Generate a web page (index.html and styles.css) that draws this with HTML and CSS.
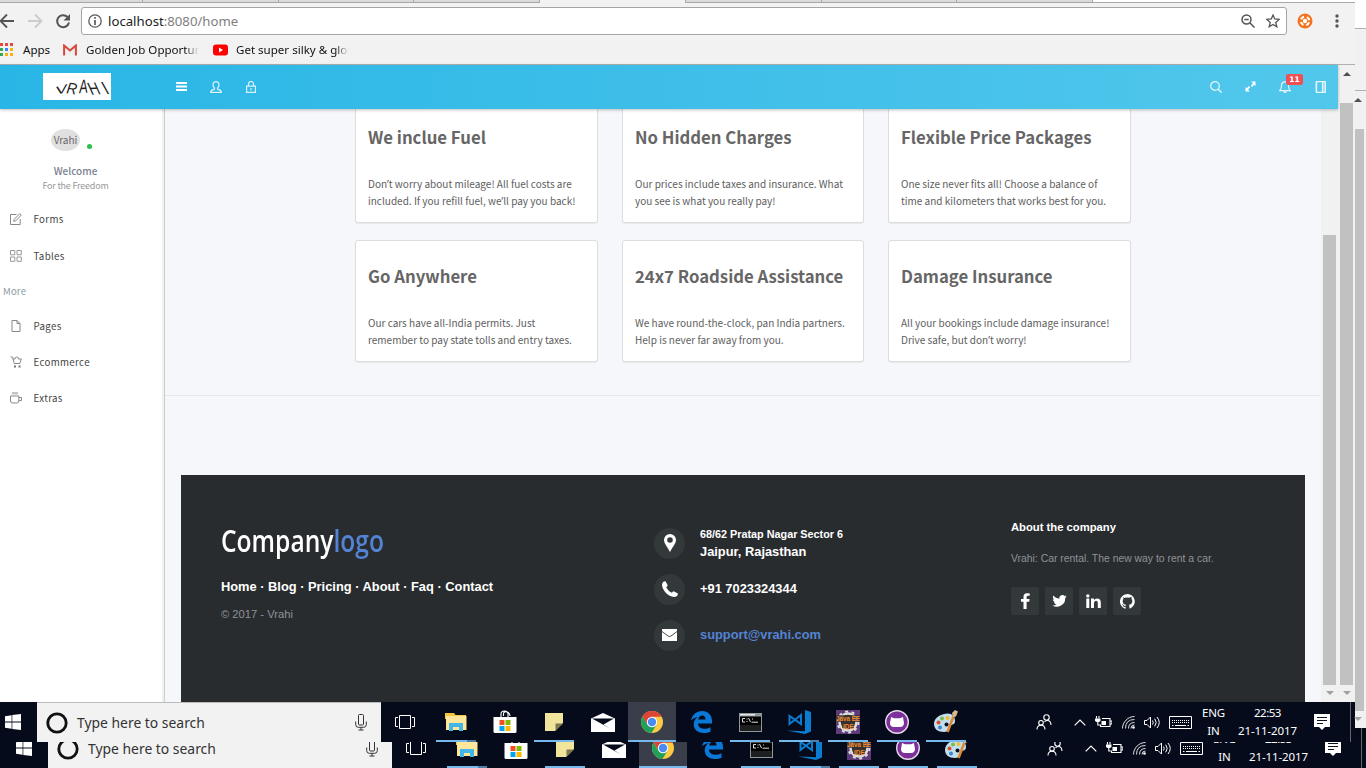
FILE: index.html
```html
<!DOCTYPE html>
<html lang="en">
<head>
<meta charset="utf-8">
<title>Vrahi</title>
<link rel="stylesheet" href="styles.css">
</head>
<body>
<svg class="sprite" width="0" height="0">
  <symbol id="win" viewBox="0 0 16 16"><path fill="#fff" d="M0 2.2 6.6 1.2V7.6H0zM7.3 1.1 16 0V7.6H7.3zM0 8.4H6.6V14.8L0 13.8zM7.3 8.4H16V16L7.3 14.9z"/></symbol>
  <symbol id="ring" viewBox="0 0 22 22"><circle cx="11" cy="11" r="9.2" fill="none" stroke="#111" stroke-width="2.8"/></symbol>
  <symbol id="mic" viewBox="0 0 12 17"><g fill="none" stroke="#333"><rect x="3.500" y=".5" width="5" height="10.500" rx="1"/><path d="M.7 7.500v3.200q0 2.600 2.600 2.600h5.400q2.600 0 2.600-2.600V7.500M6 13.500V16M3.500 16h5"/></g></symbol>
  <symbol id="view" viewBox="0 0 20 14"><path d="M4.500.5h11v13h-11zM3 2.500H.5v9H3M17 2.500h2.500v9H17" fill="none" stroke="#fff"/></symbol>
  <symbol id="folder" viewBox="0 0 22 20"><path fill="#f5c63c" d="M0 1h9l1.500 2H21v4H0z"/><path fill="#ffe69a" d="M1 4h20.500v14H1z"/><path fill="#43b5e6" d="M4 11h14v8h-4v-4H8v4H4z"/></symbol>
  <symbol id="store" viewBox="0 0 24 24"><path d="M8 8V4q0-3 3.500-3T15 4v4M10.500 6V3.500Q11 1 14 2t3 4" fill="none" stroke="#fff" stroke-width="1.100"/><path fill="#fff" d="M.5 7h23v14.500q0 1.500-1.500 1.500H2Q.5 23 .5 21.500z"/><path fill="#f25022" d="M6.500 10h5v5h-5z"/><path fill="#7fba00" d="M12.500 10h5v5h-5z"/><path fill="#00a4ef" d="M6.500 16h5v5h-5z"/><path fill="#ffb900" d="M12.500 16h5v5h-5z"/></symbol>
  <symbol id="note" viewBox="0 0 18 18"><path fill="#f1e59b" d="M0 0h18v10l-8 8H0z"/><path fill="#7c774f" d="M10.500 10.500H18L10.500 18z"/></symbol>
  <symbol id="mail" viewBox="0 0 24 19"><path fill="#fff" d="M0 5.500 12 0l12 5.500V19H0z"/><path fill="#050b1b" d="M1 5.500h22L12.500 11.500 19 15.500z"/></symbol>
  <symbol id="chrome" viewBox="0 0 22 22"><circle cx="11" cy="11" r="11" fill="#fbcb43"/><path fill="#db4437" d="M1.500 5.500A11 11 0 0 1 20.600 5.700H11L6.300 13.500z"/><path fill="#21a05a" d="M1.500 5.500A11 11 0 0 0 10.500 22L15.500 13.700 11 16 6.300 13.600z"/><circle cx="11" cy="11" r="5.200" fill="#fff"/><circle cx="11" cy="11" r="4.200" fill="#4a8af4"/></symbol>
  <symbol id="edge" viewBox="0 0 21 22"><path fill="#0a78d7" d="M0 9.600C1.200 3.500 5.500 0 11 0c6.400 0 10 4.500 10 10v2.500H7c.2 4 3.700 5.300 7 5.300 2.300 0 4-.6 5.500-1.500v4.500C17.500 21.700 15.400 22 12.700 22 6.500 22 2.700 18.500 2.700 13.300c0-3.300 1.600-5.800 4.300-7.300C4 6.400 1.700 7.700 0 9.600zM7.200 8.600H14.500C14.500 6 13.300 4.600 11.200 4.600 8.900 4.600 7.600 6.300 7.200 8.600z"/></symbol>
  <symbol id="cmd" viewBox="0 0 23 19"><path fill="#8f9797" d="M0 0h23v19H0z"/><path fill="#dfe7ea" d="M1 1h15v1.500H1z"/><path fill="#000" d="M1 3.500h21V18H1z"/><path fill="#1c1e1f" d="M1 12h21v6H1z"/><path d="M6 5.500H3.500V9H6M8 5.500v1M8 8v1M9.500 5l2 4M13.500 5.500v1M12.500 9.200H19" fill="none" stroke="#ddd"/></symbol>
  <symbol id="code" viewBox="0 0 24 24"><path fill="#0b7dd0" d="M18 0l6 2v19.500L18 24 0 20.500l18 .8z"/><path fill="none" stroke="#0b7dd0" stroke-width="2" d="M14 5v9L2.500 6v8z"/></symbol>
  <symbol id="java" viewBox="0 0 24 24"><path fill="#5e3b78" d="M0 0h24v24H0z"/><circle cx="12" cy="12" r="8.500" fill="#38302f" stroke="#dcdcdc" stroke-width="2.500"/><circle cx="12" cy="12" r="10.500" fill="none" stroke="#dcdcdc" stroke-width="2" stroke-dasharray="3 3.600"/><path fill="#38302f" d="M0 5h24v7H0zM6 12h12v6H6z" opacity=".75"/><text x="0" y="11" textLength="24" lengthAdjust="spacingAndGlyphs" class="java-t">Java EE</text><text x="7" y="18.500" textLength="11" lengthAdjust="spacingAndGlyphs" class="java-t">IDE</text></symbol>
  <symbol id="cat" viewBox="0 0 24 24"><circle cx="12" cy="12" r="11.300" fill="#7d2f9c" stroke="#e6dce9" stroke-width="1.400"/><path fill="#fff" d="M6 7l3 1.300h6L18 7l.5 3.500c1 2.500.5 6.500-3 6.500h-7c-3.500 0-4-4-3-6.500z"/></symbol>
  <symbol id="paint" viewBox="0 0 24 24"><path fill="#c2dff0" d="M10 4c7-2 11 2 11 7 0 4-3 3-5 5s0 6-6 6S0 19 0 14 4 5.500 10 4z"/><circle cx="12.500" cy="14.500" r="2" fill="#08101f"/><circle cx="4.500" cy="12.500" r="2" fill="#d9512c"/><circle cx="8" cy="8.500" r="2" fill="#7fba45"/><circle cx="13.500" cy="8" r="2" fill="#f2bd30"/><circle cx="6" cy="17.500" r="2" fill="#3e83cf"/><path d="M20 5l-6.500 17" stroke="#dd8a34" stroke-width="2.600"/><path fill="#d8b78b" d="M18 3l3-3 3 1.500-2 5-3 .5z"/></symbol>
  <symbol id="people" viewBox="0 0 16 16"><g fill="none" stroke="#fff" stroke-width="1.100"><circle cx="10.500" cy="3.500" r="2.700"/><circle cx="5" cy="8.800" r="2.300"/><path d="M1 15.500q0-4.200 4-4.200t4 4.200M8.500 8q1-1.500 3-1.500 3.200 0 3.500 4.500"/></g></symbol>
  <symbol id="caret" viewBox="0 0 12 7"><path d="M.7 6.300 6 1l5.300 5.300" fill="none" stroke="#fff" stroke-width="1.200"/></symbol>
  <symbol id="battery" viewBox="0 0 17 13"><path d="M7 2.500h8v8H5.500V8.500M15.500 5H17v3h-1.500M1.500 0v2.500M4 0v2.500M2.800 5v4h2" fill="none" stroke="#fff" stroke-width="1.100"/><path fill="#fff" d="M0 2.500h5.500V5L4 6H1.500L0 5zM6.500 5h4.500v4H6.500z"/></symbol>
  <symbol id="wifi" viewBox="0 0 13 13"><g fill="none" stroke="#ddd" stroke-width="1"><path d="M.5 12.500C.5 6 6 .5 12.500.5M3.500 12.500q0-9 9-9M6.500 12.500q0-6 6-6"/><path d="M9 12.500q0-3.500 3.500-3.500" /></g><circle cx="11.500" cy="11.500" r="1.300" fill="#fff"/></symbol>
  <symbol id="vol" viewBox="0 0 16 13"><path d="M.5 4.500H3L6.500 1v11L3 8.500H.5zM8.500 4.500q1.500 2 0 4M10.700 2.700q3 3.800 0 7.600M13 1q4.500 5.500 0 11" fill="none" stroke="#fff"/></symbol>
  <symbol id="kbd" viewBox="0 0 23 13"><path d="M.5.500h22v12H.5z" fill="none" stroke="#fff"/><path d="M3 4.500h17M3 6.500h17" stroke="#fff" stroke-dasharray="1 1"/><path d="M6 9.500h11M3 9.500h1.500M18.500 9.500H20" stroke="#fff"/></symbol>
  <symbol id="notif" viewBox="0 0 16 16"><path fill="#fff" d="M0 0h16v13h-5l-3 3-3-3H0z"/><path d="M3 3.500h10M3 6.500h10M3 9.500h6" stroke="#0a1120"/></symbol>
</svg>

<div class="upper">
  <div class="window">
    <div class="tabs"><i class="tab"></i><i class="tab"></i><i class="tab t3"></i><i class="tab t4"></i><i class="tab active"></i><i class="tab"></i><i class="tab"></i><i class="tab"></i></div>
    <div class="toolbar">
      <svg class="nav" width="76" height="20" viewBox="0 0 76 20" fill="none" stroke-width="1.900"><path d="M14 10H1M7 3.500.5 10 7 16.500" stroke="#555"/><path d="M28 10h13M35 3.500 41.500 10 35 16.500" stroke="#ccc"/><path d="M67.500 6A6 6 0 1 0 69 11.500" stroke="#555" stroke-width="2"/><path d="M70 3v6.500h-6.500z" fill="#555"/></svg>
      <div class="address">
        <svg width="14" height="14" viewBox="0 0 14 14"><circle cx="7" cy="7" r="6.200" fill="none" stroke="#5a5a5a" stroke-width="1.300"/><path d="M7 3v1.700M7 6v5" stroke="#5a5a5a" stroke-width="1.700"/></svg>
        <span class="url">localhost<em>:8080/home</em></span>
        <svg width="14" height="14" viewBox="0 0 14 14" fill="none" stroke="#555" stroke-width="1.500"><circle cx="5.500" cy="5.500" r="4.500"/><path d="M9 9l4.500 4.500M3.300 5.500h4.400"/></svg>
        <svg class="star" width="14" height="14" viewBox="0 0 14 14"><path d="M7 1l1.700 4 4.500.4-3.400 3 1 4.400L7 10.500l-3.800 2.300 1-4.400-3.400-3 4.500-.4z" fill="none" stroke="#555" stroke-width="1.300"/></svg>
      </div>
      <svg class="ext" width="16" height="16" viewBox="0 0 16 16"><circle cx="8" cy="8" r="7.500" fill="#f47521"/><circle cx="8" cy="8" r="4.300" fill="none" stroke="#fff" stroke-width="2" stroke-dasharray="3.750 3" stroke-dashoffset="-1.500"/><circle cx="8" cy="8" r="2.200" fill="#fff"/></svg>
      <svg class="dots" width="4" height="14" viewBox="0 0 4 14" fill="#555"><circle cx="2" cy="2" r="1.700"/><circle cx="2" cy="7" r="1.700"/><circle cx="2" cy="12" r="1.700"/></svg>
    </div>
    <div class="bookmarks">
      <svg width="13" height="13" viewBox="0 0 13 13"><path fill="#e8453c" d="M0 0h3v3H0zM5 0h3v3H5zM10 0h3v3h-3z"/><path fill="#34a853" d="M0 5h3v3H0zM0 10h3v3H0z"/><path fill="#4285f4" d="M5 5h3v3H5z"/><path fill="#f9b010" d="M10 5h3v3h-3zM10 10h3v3h-3zM5 10h3v3H5z"/></svg>
      <span class="b1">Apps</span>
      <svg class="gm" width="14" height="12" viewBox="0 0 14 12"><path fill="#eee" d="M1 1h12v10H1z"/><path d="M1.100 11.500V1.500L7 6.500l5.900-5v10" fill="none" stroke="#d8473c" stroke-width="2"/></svg>
      <span class="b2 fade">Golden Job Opportur</span>
      <svg class="yt" width="15" height="12" viewBox="0 0 15 12"><rect y=".5" width="15" height="11" rx="3" fill="#f00"/><path fill="#fff" d="M6 3.500 10 6 6 8.500z"/></svg>
      <span class="b3 fade">Get super silky &amp; glos</span>
    </div>
    <div class="viewport">
      <div class="page">
        <header class="topbar">
          <div class="brand"><b>V</b><b>R</b><b>A</b><b>H</b><b>I</b></div>
          <svg class="ic-menu" width="11" height="9" viewBox="0 0 11 9"><path d="M0 1h11M0 4.500h11M0 8h11" stroke="#fff" stroke-width="1.800"/></svg>
          <svg class="ic-user" width="12" height="12" viewBox="0 0 12 12"><path d="M6 .6c2 0 3 1.300 3 3.200C9 5.400 8.300 6.500 7.500 7v1c2 .6 3.800 1 3.900 3.400H.6C.7 9 2.500 8.600 4.500 8V7C3.700 6.500 3 5.400 3 3.800 3 1.900 4 .6 6 .6z" fill="none" stroke="#d9f3fc" stroke-width="1.200"/></svg>
          <svg class="ic-lock" width="10" height="12" viewBox="0 0 10 12"><path d="M.6 5.100h8.800v6.300H.6zM2.500 5V3a2.500 2.500 0 0 1 5 0v2M5 7v2.500" fill="none" stroke="#d9f3fc" stroke-width="1.200"/></svg>
          <span class="grow"></span>
          <svg class="ic-search" width="12" height="12" viewBox="0 0 12 12"><circle cx="5" cy="5" r="4.300" fill="none" stroke="#e5f7fd" stroke-width="1.200"/><path d="M8 8l3.600 3.600" stroke="#e5f7fd" stroke-width="1.500"/></svg>
          <svg class="ic-exp" width="11" height="11" viewBox="0 0 11 11"><path fill="#fff" d="M6 .5h4.500V5L9.200 3.700 7 5.900 5.900 4.800 8 2.300zM5 10.500H.5V6l1.300 1.300L4 5.100l1.100 1.100L3 8.700z"/></svg>
          <span class="bell"><svg width="12" height="12" viewBox="0 0 12 12"><path d="M.8 9.600C2.300 8.500 2.300 7 2.500 4.500 2.600 2.300 4 .8 6 .8s3.400 1.500 3.500 3.700c.2 2.500.2 4 1.700 5.100zM4.800 10q.2 1.500 1.200 1.500T7.200 10" fill="none" stroke="#e5f7fd" stroke-width="1.200"/></svg><b class="badge">11</b></span>
          <svg class="ic-book" width="11" height="12" viewBox="0 0 11 12"><path d="M1.500.6h8.900v10.800H1.500zM7.500.6v10.800" fill="none" stroke="#e5f7fd" stroke-width="1.200"/><path d="M.2 2h2M.2 4h2M.2 6h2M.2 8h2M.2 10h2" stroke="#e5f7fd"/><path fill="#a9e1f5" d="M8 1h2v10H8z"/></svg>
        </header>
        <div class="body">
          <aside class="side">
            <div class="avatar"><span class="face">Vrahi</span><i class="online"></i></div>
            <div class="welcome">Welcome</div>
            <div class="tagline">For the Freedom</div>
            <nav>
              <a class="n1"><svg width="12" height="12" viewBox="0 0 12 12"><path d="M6.500 1.500H.5v10h9.700V6M4 6.500 9.800.6l1.500 1.500L5.500 8 3.700 8.300z" fill="none" stroke="#888"/></svg>Forms</a>
              <a class="n2"><svg width="12" height="12" viewBox="0 0 12 12"><path d="M.5.500h4.300v4.300H.5zM7 .5h4.300v4.300H7zM.5 7h4.300v4.300H.5zM7 7h4.300v4.300H7z" fill="none" stroke="#999"/></svg>Tables</a>
              <h6>More</h6>
              <a class="n3"><svg width="12" height="12" viewBox="0 0 12 12"><path d="M2 .5h5L10 3.500v8H2zM7 .5v3h3" fill="none" stroke="#888"/></svg>Pages</a>
              <a class="n4"><svg width="12" height="12" viewBox="0 0 12 12"><path d="M.5 1h2l1.800 6.500h5.500l1.500-4.500H8.500M3 3h2q0-2 1.800-2t1.700 2" fill="none" stroke="#888"/><path fill="#777" d="M4 9.500h2v2H4zM8.500 9.500h2v2h-2z"/></svg>Ecommerce</a>
              <a class="n5"><svg width="12" height="12" viewBox="0 0 12 12"><path d="M.5 4h8.300v5q0 2-2 2h-4q-2.300 0-2.300-2zM9 5.500h2.500v3H9M3 0v2.500M5 0v2.500M7 0v2.500" fill="none" stroke="#888"/></svg>Extras</a>
            </nav>
          </aside>
          <main>
            <section class="cards">
              <article><h3>We inclue Fuel</h3><p>Don<span class="ap">’</span>t worry about mileage! All fuel costs are<br>included. If you refill fuel, we<span class="ap">’</span>ll pay you back!</p></article>
              <article><h3>No Hidden Charges</h3><p>Our prices include taxes and insurance. What<br>you see is what you really pay!</p></article>
              <article><h3>Flexible Price Packages</h3><p>One size never fits all! Choose a balance of<br>time and kilometers that works best for you.</p></article>
              <article><h3>Go Anywhere</h3><p>Our cars have all-India permits. Just<br>remember to pay state tolls and entry taxes.</p></article>
              <article><h3>24x7 Roadside Assistance</h3><p>We have round-the-clock, pan India partners.<br>Help is never far away from you.</p></article>
              <article><h3>Damage Insurance</h3><p>All your bookings include damage insurance!<br>Drive safe, but don<span class="ap">’</span>t worry!</p></article>
            </section>
            <hr>
            <footer>
              <div class="f1">
                <div class="logo">Company<em>logo</em></div>
                <div class="links">Home · Blog · Pricing · About · Faq · Contact</div>
                <div class="copy">© 2017 - Vrahi</div>
              </div>
              <div class="f2">
                <div class="row"><i><svg width="12" height="18" viewBox="0 0 12 18"><path fill="#fff" fill-rule="evenodd" d="M6 0a6 6 0 0 1 6 6c0 3-2.500 5.500-6 12C2.500 11.500 0 9 0 6a6 6 0 0 1 6-6zm0 3.200a2.800 2.800 0 1 0 0 5.600 2.800 2.800 0 0 0 0-5.600z"/></svg></i><div><small>68/62 Pratap Nagar Sector 6</small><br>Jaipur, Rajasthan</div></div>
                <div class="row"><i><svg width="16" height="16" viewBox="0 0 16 16"><path fill="#fff" d="M3.500.2 5.700 4.300Q5.500 5.400 4.200 6.200 6 10 9.800 11.800q.9-1.300 1.900-1.500L15.900 12.500q0 3.300-4 3.500C6.500 15.800.2 9.500 0 4.100.2.800 1.800.1 3.500.2z"/></svg></i><div>+91 7023324344</div></div>
                <div class="row"><i><svg width="15" height="12" viewBox="0 0 15 12"><path fill="#fff" d="M0 0h15v12H0z"/><path d="M0 2.500 6 7q1.500 1 3 0l6-4.500" fill="none" stroke="#33383b" stroke-width=".9"/></svg></i><div class="sup">support@vrahi.com</div></div>
              </div>
              <div class="f3">
                <h4>About the company</h4>
                <p>Vrahi: Car rental. The new way to rent a car.</p>
                <div class="social">
                  <a><svg width="9" height="16" viewBox="0 0 9 16"><path fill="#fff" d="M2.500 16V8.700H0V6h2.500V4Q2.500.4 6 .3 7.800.2 8.700.4v2.400H7Q5.600 2.800 5.600 4v2h3l-.4 2.700H5.600V16z"/></svg></a>
                  <a><svg width="15" height="12" viewBox="0 0 24 20"><path fill="#fff" d="M24 2.400c-.9.400-1.800.7-2.800.8 1-.6 1.800-1.600 2.200-2.700-1 .6-2 1-3.100 1.200a4.900 4.900 0 0 0-8.400 4.500C7.700 6 4.100 4 1.700 1 .4 3.200 1 6.100 3.200 7.500 2.400 7.500 1.600 7.300 1 6.900c0 2.300 1.600 4.400 3.900 4.900-.7.200-1.500.2-2.200.1.600 2 2.400 3.400 4.600 3.400A9.900 9.900 0 0 1 0 17.300 14 14 0 0 0 21.500 4.900c1-.7 1.900-1.600 2.500-2.500z"/></svg></a>
                  <a><svg width="15" height="14" viewBox="0 0 15 14"><path fill="#fff" d="M.3 4.600h3V14h-3zM5 4.600h3v1.300Q9 4.400 11 4.400q3.800 0 3.800 4.200V14h-3V9q0-2.200-1.700-2.200T8 9v5H5z"/><circle cx="1.800" cy="1.900" r="1.700" fill="#fff"/></svg></a>
                  <a><svg width="15" height="15" viewBox="0 0 16 16"><path fill="#fff" d="M8 0a8 8 0 0 0-2.500 15.600c.4.100.5-.2.500-.4v-1.500c-2.200.5-2.700-1-2.700-1-.4-.9-.9-1.200-.9-1.200-.7-.5.100-.5.100-.5.800.1 1.200.8 1.200.8.700 1.300 1.900.9 2.300.7.100-.5.300-.9.500-1.100C4.700 11.200 2.900 10.500 2.900 7.400c0-.9.300-1.600.8-2.100-.1-.2-.4-1 .1-2.100 0 0 .7-.2 2.200.8a7.500 7.500 0 0 1 4 0c1.500-1 2.200-.8 2.200-.8.400 1.100.2 1.900.1 2.100.5.500.8 1.200.8 2.100 0 3.100-1.900 3.800-3.700 4 .3.200.6.700.6 1.500v2.200c0 .2.100.5.500.4A8 8 0 0 0 8 0z"/></svg></a>
                </div>
              </div>
            </footer>
          </main>
          <div class="scroll inner"><i class="thumb"></i><i class="down"></i></div>
        </div>
      </div>
      <div class="scroll outer"><i class="up"></i><i class="thumb"></i><i class="down"></i></div>
    </div>
    <div class="taskbar">
      <div class="start"><svg width="16" height="16"><use href="#win"/></svg></div>
      <div class="find"><svg width="22" height="22"><use href="#ring"/></svg><span>Type here to search</span><svg class="mic" width="12" height="17"><use href="#mic"/></svg></div>
      <div class="app tv"><svg width="20" height="14"><use href="#view"/></svg></div>
      <div class="app on split"><svg width="22" height="20"><use href="#folder"/></svg></div>
      <div class="app"><svg width="24" height="24"><use href="#store"/></svg></div>
      <div class="app on"><svg width="18" height="18"><use href="#note"/></svg></div>
      <div class="app"><svg width="24" height="19"><use href="#mail"/></svg></div>
      <div class="app on current"><svg width="22" height="22"><use href="#chrome"/></svg></div>
      <div class="app"><svg width="21" height="22"><use href="#edge"/></svg></div>
      <div class="app on"><svg width="23" height="19"><use href="#cmd"/></svg></div>
      <div class="app on split"><svg width="24" height="24"><use href="#code"/></svg></div>
      <div class="app on"><svg width="24" height="24"><use href="#java"/></svg></div>
      <div class="app on"><svg width="24" height="24"><use href="#cat"/></svg></div>
      <div class="app on"><svg width="24" height="24"><use href="#paint"/></svg></div>
      <div class="tray"><i class="w48"><svg width="16" height="16"><use href="#people"/></svg></i><i class="w24"><svg width="12" height="7"><use href="#caret"/></svg></i><i class="w23"><svg width="17" height="13"><use href="#battery"/></svg></i><i class="w26"><svg width="13" height="13"><use href="#wifi"/></svg></i><i class="w22"><svg width="16" height="13"><use href="#vol"/></svg></i><i class="w34"><svg width="23" height="13"><use href="#kbd"/></svg></i><div class="lang"><span>ENG</span><span>IN</span></div><div class="clock"><span>22:53</span><span>21-11-2017</span></div><i class="w34"><svg width="16" height="16"><use href="#notif"/></svg></i><i class="peek"></i></div>
    </div>
  </div>
  <div class="behind">
    <div class="bt"></div><div class="bm"></div>
    <div class="scroll far"><i class="up"></i><i class="thumb"></i><i class="down"></i></div>
    <div class="bd"></div>
  </div>
</div>
<div class="lower">
    <div class="taskbar back">
      <div class="start"><svg width="16" height="16"><use href="#win"/></svg></div>
      <div class="find"><svg width="22" height="22"><use href="#ring"/></svg><span>Type here to search</span><svg class="mic" width="12" height="17"><use href="#mic"/></svg></div>
      <div class="app tv"><svg width="20" height="14"><use href="#view"/></svg></div>
      <div class="app on split"><svg width="22" height="20"><use href="#folder"/></svg></div>
      <div class="app"><svg width="24" height="24"><use href="#store"/></svg></div>
      <div class="app on"><svg width="18" height="18"><use href="#note"/></svg></div>
      <div class="app"><svg width="24" height="19"><use href="#mail"/></svg></div>
      <div class="app on current"><svg width="22" height="22"><use href="#chrome"/></svg></div>
      <div class="app"><svg width="21" height="22"><use href="#edge"/></svg></div>
      <div class="app on"><svg width="23" height="19"><use href="#cmd"/></svg></div>
      <div class="app on split"><svg width="24" height="24"><use href="#code"/></svg></div>
      <div class="app on"><svg width="24" height="24"><use href="#java"/></svg></div>
      <div class="app on"><svg width="24" height="24"><use href="#cat"/></svg></div>
      <div class="app on"><svg width="24" height="24"><use href="#paint"/></svg></div>
      <div class="tray"><i class="w48"><svg width="16" height="16"><use href="#people"/></svg></i><i class="w24"><svg width="12" height="7"><use href="#caret"/></svg></i><i class="w23"><svg width="17" height="13"><use href="#battery"/></svg></i><i class="w26"><svg width="13" height="13"><use href="#wifi"/></svg></i><i class="w22"><svg width="16" height="13"><use href="#vol"/></svg></i><i class="w34"><svg width="23" height="13"><use href="#kbd"/></svg></i><div class="lang"><span>ENG</span><span>IN</span></div><div class="clock"><span>22:53</span><span>21-11-2017</span></div><i class="w34"><svg width="16" height="16"><use href="#notif"/></svg></i><i class="peek"></i></div>
    </div>
</div>
</body>
</html>
```
FILE: styles.css
```css
* { box-sizing: border-box; }
body { margin: 0; width: 1366px; height: 768px; overflow: hidden; background: #fff; font-family: "Noto Sans CJK SC", "Noto Sans", sans-serif; color: #666; }
svg { display: block; flex: none; }
i, em { font-style: normal; }
.sprite { position: absolute; }
.java-t { font: bold 8px "Liberation Sans", sans-serif; fill: #f08a2c; }
.upper { display: flex; height: 742px; }
.window { width: 1355px; height: 742px; display: flex; flex-direction: column; }

/* browser frame */
.tabs { height: 3px; display: flex; background: #fff; border-bottom: 1px solid #a8a8a8; }
.tab { width: 135.500px; height: 2px; background: #dadada; border-right: 1px solid #aaa; }
.tab:first-child { width: 143px; }
.tab.t4 { width: 126px; }
.tab.active { width: 146px; height: 3px; background: #f2f2f2; }
.toolbar { height: 34px; background: #f2f2f2; display: flex; align-items: center; padding-top: 2px; }
.nav { margin-right: 5px; }
.address { width: 1206px; height: 28px; border: 1px solid #a5a5a5; border-radius: 3px; background: #fff; display: flex; align-items: center; padding: 0 6px; }
.url { flex: 1; margin-left: 6px; font: 13.200px "Noto Sans", sans-serif; color: #222; }
.url em { color: #808080; }
.star { margin-left: 11px; }
.ext { margin-left: 10px; }
.dots { margin-left: 22px; }
.bookmarks { height: 28px; background: #f2f2f2; border-bottom: 1px solid #b0b0b0; display: flex; align-items: center; font: 11.550px "Noto Sans", sans-serif; color: #111; padding-bottom: 2px; white-space: nowrap; }
.b1 { margin-left: 10px; width: 40px; }
.b2 { margin-left: 9px; width: 113px; }
.yt { margin-left: 14px; }
.b3 { margin-left: 8px; width: 113px; }
.fade { overflow: hidden; -webkit-mask-image: linear-gradient(90deg, #000 88%, transparent); mask-image: linear-gradient(90deg, #000 88%, transparent); }

/* page header */
.viewport { height: 637px; display: flex; }
.page { width: 1338px; height: 637px; display: flex; flex-direction: column; }
.topbar { height: 44px; flex: none; background: linear-gradient(90deg, #29b6e6, #52c7ec); display: flex; align-items: center; box-shadow: 0 1px 3px rgba(0,0,0,.25); z-index: 2; padding: 0 12px 1px 0; }
.brand { width: 68px; height: 27px; margin-left: 43px; background: #fff; display: flex; justify-content: center; align-items: center; padding: 4px 0 0 6px; color: #222; }
.brand b { font: italic 16px/16px "Liberation Sans", sans-serif; transform: rotate(8deg) scale(.9, 1); }
.brand b:nth-child(1) { transform: translateY(1px) rotate(-14deg) scale(1.1,.7); }
.brand b:nth-child(3) { transform: translateY(-2px) rotate(-4deg) scale(.8, 1.2); }
.brand b:nth-child(4) { transform: rotate(-4deg) skewX(28deg) scale(.9, 1.1); }
.brand b:nth-child(5) { transform: translate(3px, -1px) skewX(36deg) scaleY(1.1); }
.ic-menu { margin-left: 65px; }
.ic-user { margin-left: 23px; }
.ic-lock { margin-left: 24px; }
.grow { flex: 1; }
.ic-exp { margin-left: 23px; }
.bell { position: relative; margin-left: 23px; }
.badge { position: absolute; left: 7px; top: -7px; width: 17px; height: 11px; border-radius: 2px; background: #ef5055; color: #fff; font: bold 7.500px/11px "DejaVu Sans", sans-serif; text-align: center; }
.ic-book { margin-left: 24px; }

/* sidebar */
.body { height: 593px; display: flex; overflow: hidden; background: #f6f7fb; }
.side { width: 165px; background: #fff; border-right: 1px solid #ccc; box-shadow: inset -2px 0 #f1f1f1; font-size: 10px; }
.avatar { display: flex; align-items: center; padding: 20px 0 0 51px; height: 42px; }
.face { width: 29px; height: 22px; border-radius: 50%; background: #e0e0e0; line-height: 21px; text-align: center; color: #666; white-space: nowrap; }
.online { width: 5px; height: 5px; border-radius: 50%; background: #27c24c; margin: 13px 0 0 7px; }
.welcome { margin-top: 11px; width: 151px; text-align: center; line-height: 18px; color: #7a8090; font-weight: 500; }
.tagline { width: 151px; text-align: center; font-size: 9px; line-height: 12px; letter-spacing: -.2px; color: #999; }
nav a { display: flex; align-items: center; height: 36px; padding-left: 10px; gap: 11.500px; color: #444; font-size: 9.700px; letter-spacing: .35px; }
nav .n1 { margin-top: 9px; }
nav .n2 { margin-top: 1px; }
nav h6 { margin: 0; font: inherit; font-size: 9.500px; color: #8b9aa3; padding-left: 3px; height: 34px; line-height: 34px; letter-spacing: .2px; }

/* feature cards */
main { width: 1156px; padding: 0 16px; }
.cards { margin: -8px 0 0 174px; display: grid; grid-template-columns: 243px 242px 243px; column-gap: 24px; row-gap: 17px; }
article { height: 122px; background: #fff; border: 1px solid #ddd; border-radius: 3px; box-shadow: 0 1px 1px rgba(0,0,0,.06); padding: 20px 0 0 12px; white-space: nowrap; }
h3 { margin: 0; font-size: 16.730px; line-height: 30px; font-weight: 600; color: #666; }
article p { margin: 23px 0 0; font-size: 10.030px; line-height: 17px; color: #5e5e5e; }
.ap { font-family: "Noto Sans", sans-serif; line-height: 1; }
hr { margin: 33px -16px 79px; border: 0; border-top: 1px solid #e6e8ea; }

/* footer */
footer { height: 227px; background: #292c2f; display: flex; font-family: "Liberation Sans", sans-serif; font-weight: bold; color: #fff; white-space: nowrap; }
.f1 { width: 473px; padding: 46px 0 0 40px; }
.logo { font: 600 30px/40px "Comic Sans MS", "Open Sans", sans-serif; transform: scaleX(.82); transform-origin: 0 0; }
.logo em { color: #5383d3; }
.links { margin-top: 17px; font-size: 12.850px; line-height: 17px; }
.copy { margin-top: 11px; font-size: 11.200px; line-height: 16px; font-weight: normal; color: #8f9296; }
.f2 { width: 357px; padding-top: 45px; font-size: 12.850px; }
.row { display: flex; align-items: center; height: 46px; gap: 15px; line-height: 18px; }
.row i { width: 31px; height: 31px; border-radius: 50%; background: #33383b; display: grid; place-items: center; }
.row small { font-size: 10.820px; }
.sup { color: #5383d3; }
.f3 { padding-top: 44px; }
h4 { margin: 0; font-size: 11.250px; line-height: 16px; }
.f3 p { margin: 16px 0 0; font-size: 10.400px; line-height: 16px; font-weight: normal; color: #8f9296; }
.social { display: flex; gap: 6px; margin-top: 20px; }
.social a { width: 28px; height: 28px; border-radius: 2px; background: #33383b; display: grid; place-items: center; }

/* scrollbars */
.scroll { width: 17px; background: #f1f1f1; display: flex; flex-direction: column; align-items: center; }
.scroll .thumb { width: 13px; background: #c1c1c1; }
.up { border: 4px solid transparent; border-top: 0; border-bottom: 4px solid #505050; }
.down { border: 4px solid transparent; border-bottom: 0; border-top: 4px solid #a0a0a0; margin-top: 6px; }
.inner .thumb { margin-top: 126px; height: 450px; }
.outer .up { margin-top: 7px; }
.outer .thumb { margin-top: 27px; height: 582px; }
.behind { width: 11px; display: flex; flex-direction: column; }
.bt { height: 29px; background: #fff; border-bottom: 1px solid #b0b0b0; }
.bm { height: 62px; background: #f1f1f1; border-bottom: 1px solid #b0b0b0; }
.far { width: 11px; height: 637px; align-items: flex-start; }
.far .up { margin: 7px 0 0 -1px; }
.far .thumb { width: 9px; height: 582px; margin-top: 27px; }
.far .down { margin-left: -1px; }
.bd { flex: 1; background: #040a18; border-right: 4px solid #040a18; box-shadow: inset -1px 0 #666; }

/* taskbars */
.taskbar { height: 40px; flex: none; display: flex; background: #050b1b; font-family: "Noto Sans", sans-serif; color: #fff; }
.start { width: 37px; padding: 12px 0 0 5px; flex: none; }
.find { width: 344px; flex: none; background: #f2f2f2; border-top: 1px solid #bbb; display: flex; align-items: center; padding-left: 9px; gap: 9px; font-size: 13.900px; color: #333; }
.find .mic { margin-left: auto; margin-right: 14px; }
.app { width: 48px; margin-right: 1px; flex: none; position: relative; display: grid; place-items: center; }
.app.tv { margin-right: 3px; }
.app.on::after { content: ""; position: absolute; left: 4px; right: 4px; bottom: 0; height: 2px; background: #76b9ed; }
.app.split::after { background: linear-gradient(90deg, #76b9ed 31px, #4f7fa8 31px); }
.app.current { background: #3a3e4a; }
.app.current::after { left: 0; right: 0; }
.tray { display: flex; margin-left: 49px; }
.tray i { display: grid; place-items: center; }
.w48 { width: 48px; } .w24 { width: 24px; } .w23 { width: 23px; } .w26 { width: 26px; } .w22 { width: 22px; } .w34 { width: 34px; }
.lang { width: 33px; } .clock { width: 75px; }
.lang, .clock { display: flex; flex-direction: column; align-items: center; font-size: 11.500px; line-height: 18px; padding-top: 2px; letter-spacing: -.1px; }
.clock span:first-child { letter-spacing: -.5px; }
.tray .peek { width: 1px; background: #666; margin-left: 11px; }
.lower { height: 26px; overflow: hidden; display: flex; align-items: flex-end; background: #050b1b; }
.back { width: 1366px; padding-left: 11px; }
```
